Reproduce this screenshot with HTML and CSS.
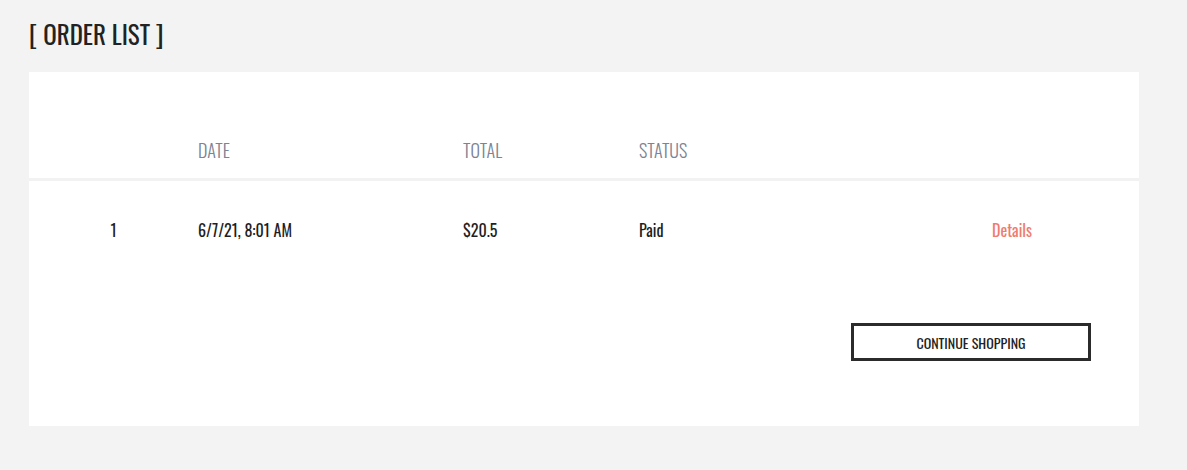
FILE: index.html
```html
<!DOCTYPE html>
<html>
<head>
<meta charset="utf-8">
<link rel="stylesheet" href="styles.css">
</head>
<body>
<div class="page">
  <h1 class="title">[ ORDER LIST ]</h1>
  <div class="card">
    <div class="row head">
      <div class="c1"></div>
      <div class="c2">DATE</div>
      <div class="c3">TOTAL</div>
      <div class="c4">STATUS</div>
      <div class="c5"></div>
    </div>
    <div class="row data">
      <div class="c1 num">1</div>
      <div class="c2">6/7/21, 8:01 AM</div>
      <div class="c3">$20.5</div>
      <div class="c4">Paid</div>
      <div class="c5"><a class="details">Details</a></div>
    </div>
    <div class="actions">
      <button class="btn">CONTINUE SHOPPING</button>
    </div>
  </div>
</div>
</body>
</html>
```
FILE: styles.css
```css
html, body {
  margin: 0;
  padding: 0;
  background: #f3f3f3;
}
body {
  font-family: "Oswald", "Liberation Sans Narrow", "DejaVu Sans Condensed", "Roboto", sans-serif;
  color: #222;
}
.page {
  padding: 0 48px 0 29px;
}
.title {
  margin: 0;
  padding-top: 18px;
  height: 72px;
  box-sizing: border-box;
  font-size: 25px;
  font-weight: 400;
  line-height: 32px;
  color: #222;
}
.card {
  background: #fff;
  width: 1110px;
  height: 354px;
  box-sizing: border-box;
}
.row {
  display: grid;
  grid-template-columns: 169px 265px 176px 246px 254px;
}
.head {
  height: 109px;
  align-items: end;
  padding-bottom: 16px;
  box-sizing: border-box;
  border-bottom: 3px solid #f2f2f2;
  color: #7b8394;
  font-size: 18px;
  line-height: 24px;
  font-weight: 300;
}
.data {
  height: 98px;
  align-items: center;
  font-size: 16px;
  font-weight: 400;
  color: #1e1e1e;
}
.num { text-align: center; }
.c5 { text-align: center; }
.details {
  color: #f07b6f;
  cursor: pointer;
}
.actions {
  display: flex;
  justify-content: flex-end;
  padding: 44px 48px 0 0;
}
.btn {
  width: 240px;
  height: 38px;
  border: 3px solid #2b2b2b;
  background: #fff;
  font-family: inherit;
  font-size: 14px;
  font-weight: 400;
  color: #222;
  padding: 0;
}
```
